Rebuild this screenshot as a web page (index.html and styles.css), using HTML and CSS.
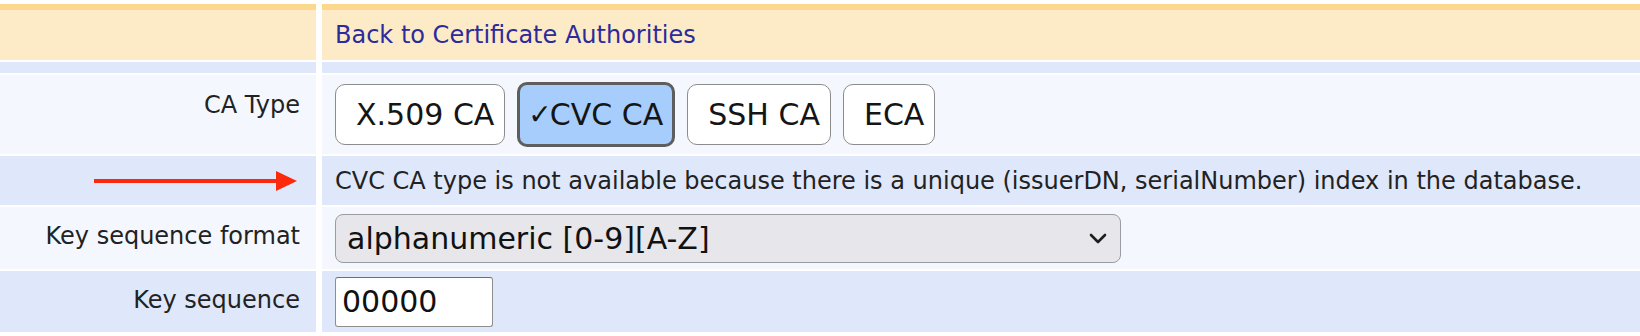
FILE: index.html
```html
<!DOCTYPE html>
<html lang="en">
<head>
<meta charset="utf-8">
<title>Edit CA</title>
<link rel="stylesheet" href="styles.css">
</head>
<body>
<div class="form">
  <div class="cell head"></div>
  <div class="cell head value"><a class="back" href="#">Back to Certificate Authorities</a></div>

  <div class="cell thin alt"></div>
  <div class="cell thin alt"></div>

  <div class="cell label top">CA Type</div>
  <div class="cell value buttons">
    <span class="btn">X.509 CA</span>
    <span class="btn selected"><span class="check">&#10003;</span>CVC CA</span>
    <span class="btn">SSH CA</span>
    <span class="btn">ECA</span>
  </div>

  <div class="cell label alt arrowcell">
    <svg class="arrow" width="203" height="20" viewBox="0 0 203 20" aria-hidden="true">
      <rect x="0" y="8" width="184" height="4" fill="#fb2a0c"/>
      <polygon points="182,0 203,10 182,20" fill="#fb2a0c"/>
    </svg>
  </div>
  <div class="cell value alt msg">CVC CA type is not available because there is a unique (issuerDN, serialNumber) index in the database.</div>

  <div class="cell label">Key sequence format</div>
  <div class="cell value selrow">
    <div class="selwrap">
      <select class="select">
        <option>alphanumeric [0-9][A-Z]</option>
      </select>
      <svg class="chev" width="18" height="12" viewBox="0 0 18 12" aria-hidden="true">
        <path d="M2 2 L9 9 L16 2" fill="none" stroke="#1e1e1e" stroke-width="2.6" stroke-linecap="round" stroke-linejoin="round"/>
      </svg>
    </div>
  </div>

  <div class="cell label alt">Key sequence</div>
  <div class="cell value alt inrow"><input class="input" type="text" value="00000"></div>
</div>
</body>
</html>
```

FILE: styles.css
```css
html, body {
  margin: 0;
  padding: 0;
  background: #ffffff;
}

body {
  font-family: "DejaVu Sans", Verdana, sans-serif;
  font-size: 24px;
  color: #222222;
  padding-top: 4px;
}

.form {
  display: grid;
  grid-template-columns: 316px 1fr;
  column-gap: 6px;
  row-gap: 2px;
}

.cell {
  background: #f4f7fe;
  box-sizing: border-box;
}

.cell.alt {
  background: #dfe7fb;
}

.head {
  background: #fdebc7;
  border-top: 6px solid #fbd88d;
  height: 56px;
}

.value {
  padding-left: 13px;
}

.head.value {
  display: flex;
  align-items: center;
}

.back {
  color: #2d2a9c;
  text-decoration: none;
}

.thin {
  height: 11px;
}

.label {
  display: flex;
  align-items: center;
  justify-content: flex-end;
  padding: 0 16px 4px 0;
  white-space: nowrap;
}

.label.top {
  align-items: flex-start;
  padding-top: 16px;
}

.arrowcell {
  padding: 0 19px 0 0;
}

.buttons {
  display: flex;
  align-items: center;
  gap: 12px;
  padding-top: 7px;
  padding-bottom: 7px;
  height: 79px;
}

.btn {
  display: inline-flex;
  align-items: center;
  box-sizing: border-box;
  height: 61px;
  padding: 0 10px 0 20px;
  border: 1.5px solid #8c8c8c;
  border-radius: 10px;
  background: #ffffff;
  font-size: 30px;
  color: #151515;
}

.btn.selected {
  height: 65px;
  padding: 0 9px 0 8px;
  border: 3px solid #5e5e5e;
  background: #a6cdfb;
}

.check {
  font-size: 28px;
  font-weight: bold;
  margin-right: -2px;
}

.msg {
  display: flex;
  align-items: center;
  height: 49px;
  white-space: nowrap;
}

.selrow {
  display: flex;
  align-items: center;
  height: 62px;
}

.selwrap {
  position: relative;
  width: 786px;
}

.select {
  -webkit-appearance: none;
  appearance: none;
  display: block;
  box-sizing: border-box;
  width: 786px;
  height: 49px;
  margin: 0;
  padding: 0 0 0 11px;
  border: 1.5px solid #9b9ba2;
  border-radius: 8px;
  background: #e6e6eb;
  font-family: "DejaVu Sans", Verdana, sans-serif;
  font-size: 30px;
  color: #111111;
}

.chev {
  position: absolute;
  left: 754px;
  top: 19px;
  pointer-events: none;
}

.inrow {
  display: flex;
  align-items: center;
  height: 61px;
}

.input {
  box-sizing: border-box;
  width: 158px;
  height: 50px;
  margin: 0;
  padding: 0 0 0 6px;
  border: 1.5px solid #8e8e8e;
  border-top-color: #6f6f6f;
  border-radius: 3px;
  background: #ffffff;
  font-family: "DejaVu Sans", Verdana, sans-serif;
  font-size: 30px;
  color: #111111;
}
```
